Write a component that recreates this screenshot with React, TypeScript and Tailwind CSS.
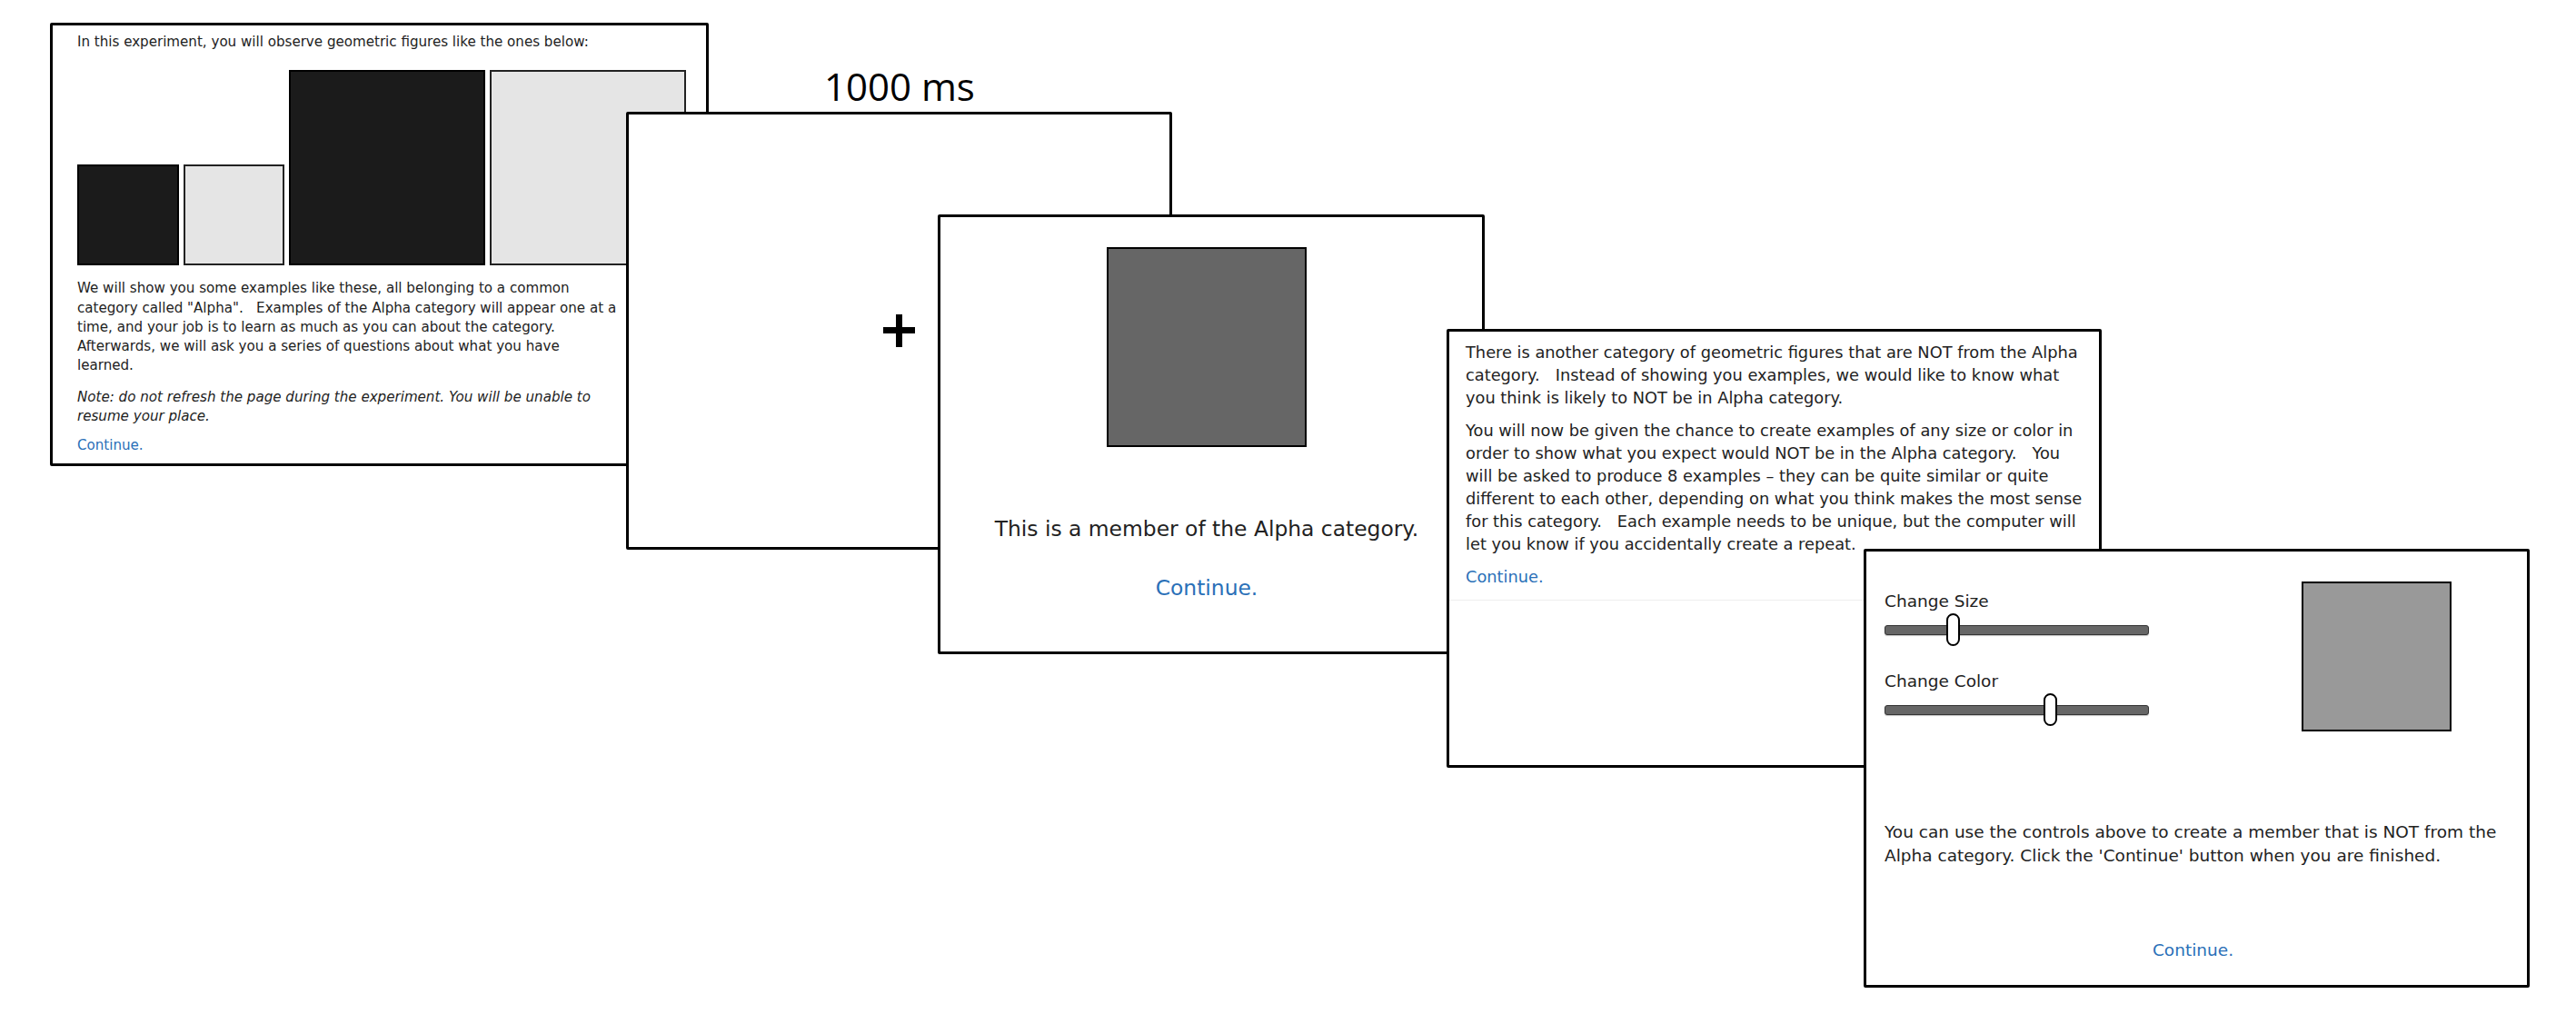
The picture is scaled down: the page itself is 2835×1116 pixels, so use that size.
import React from "react";

const font = "font-['DejaVu_Sans',sans-serif] text-[#222]";

function Slider({ at }: { at: number }) {
  return (
    <div className="relative h-[36px] w-[291px] flex items-center">
      <div className="h-[11px] w-full rounded-[3px] bg-[#666] border border-[#333] shadow-[0_1px_1px_rgba(0,0,0,0.25)]" />
      {/* thumb */}
      <div
        className="absolute top-0 h-[36px] w-[15px] rounded-full bg-white border-2 border-black"
        style={{ left: at }}
      />
    </div>
  );
}

export default function App() {
  return (
    <div className={`relative w-[2835px] h-[1116px] bg-white overflow-hidden ${font}`}>
      {/* Screen 1: instructions */}
      <div className="absolute left-[55px] top-[25px] w-[725px] h-[488px] border-[3px] border-black rounded-[2px] bg-white pl-[27px] pt-[8px] text-[15.1px] leading-[21.25px] whitespace-nowrap">
        <p>In this experiment, you will observe geometric figures like the ones below:</p>
        <div className="mt-[20px] flex items-end gap-[5px] h-[215px]">
          <div className="w-[112px] h-[111px] bg-[#1b1b1b] border-2 border-black" />
          <div className="w-[111px] h-[111px] bg-[#e5e5e5] border-2 border-[#222]" />
          <div className="w-[216px] h-[215px] bg-[#1b1b1b] border-2 border-black" />
          <div className="w-[216px] h-[215px] bg-[#e5e5e5] border-2 border-[#222]" />
        </div>
        <p className="mt-[15px]">
          We will show you some examples like these, all belonging to a common
          <br />
          category called "Alpha".&nbsp;&nbsp; Examples of the Alpha category will appear one at a
          <br />
          time, and your job is to learn as much as you can about the category.
          <br />
          Afterwards, we will ask you a series of questions about what you have
          <br />
          learned.
        </p>
        <p className="mt-[13px] italic">
          Note: do not refresh the page during the experiment. You will be unable to
          <br />
          resume your place.
        </p>
        <p className="mt-[11px] text-[#2a70b8]">Continue.</p>
      </div>

      {/* timing label */}
      <div className="absolute left-[907px] top-[74px] font-['Open_Sans',sans-serif] text-[42px] leading-[42px] text-black">
        1000 ms
      </div>

      {/* Screen 2: fixation cross */}
      <div className="absolute left-[689px] top-[123px] w-[601px] h-[482px] border-[3px] border-black rounded-[2px] bg-white flex items-center justify-center">
        <svg width="35" height="36" viewBox="0 0 35 36">
          <rect x="0" y="14" width="35" height="7" fill="#000" />
          <rect x="14" y="0" width="7" height="36" fill="#000" />
        </svg>
      </div>

      {/* Screen 3: example member */}
      <div className="absolute left-[1032px] top-[236px] w-[602px] h-[484px] border-[3px] border-black rounded-[2px] bg-white flex flex-col items-center pr-[10px]">
        <div className="mt-[33px] w-[220px] h-[220px] bg-[#666] border-2 border-black" />
        <p className="mt-[75px] text-[23.4px] leading-[31px] whitespace-nowrap">This is a member of the Alpha category.</p>
        <p className="mt-[34px] text-[23.4px] leading-[31px] text-[#2a70b8]">Continue.</p>
      </div>

      {/* Screen 4: NOT-category instructions */}
      <div className="absolute left-[1592px] top-[362px] w-[721px] h-[483px] border-[3px] border-black rounded-[2px] bg-white text-[17.8px] leading-[25px] whitespace-nowrap">
        <div className="pl-[18px] pt-[10px] pb-[13px]">
          <p>
            There is another category of geometric figures that are NOT from the Alpha
            <br />
            category.&nbsp;&nbsp; Instead of showing you examples, we would like to know what
            <br />
            you think is likely to NOT be in Alpha category.
          </p>
          <p className="mt-[11px]">
            You will now be given the chance to create examples of any size or color in
            <br />
            order to show what you expect would NOT be in the Alpha category.&nbsp;&nbsp; You
            <br />
            will be asked to produce 8 examples – they can be quite similar or quite
            <br />
            different to each other, depending on what you think makes the most sense
            <br />
            for this category.&nbsp;&nbsp; Each example needs to be unique, but the computer will
            <br />
            let you know if you accidentally create a repeat.
          </p>
          <p className="mt-[11px] text-[#2a70b8]">Continue.</p>
        </div>
        <div className="border-t border-[#eee]" />
      </div>

      {/* Screen 5: create a non-member */}
      <div className="absolute left-[2051px] top-[604px] w-[733px] h-[483px] border-[3px] border-black rounded-[2px] bg-white text-[18.5px]">
        <div className="flex items-start pl-[20px] pt-[33px]">
          <div className="w-[291px] pt-[11px] leading-[22px]">
            <p>Change Size</p>
            <div className="mt-[2px]">
              <Slider at={68} />
            </div>
            <p className="mt-[28px]">Change Color</p>
            <div className="mt-[2px]">
              <Slider at={175} />
            </div>
          </div>
          <div className="ml-[168px] w-[165px] h-[165px] bg-[#999] border-2 border-black" />
        </div>
        <p className="mt-[98px] pl-[20px] leading-[26px] whitespace-nowrap">
          You can use the controls above to create a member that is NOT from the
          <br />
          Alpha category. Click the 'Continue' button when you are finished.
        </p>
        <p className="mt-[78px] text-center leading-[26px] text-[#2a70b8] pr-[8px]">Continue.</p>
      </div>
    </div>
  );
}
